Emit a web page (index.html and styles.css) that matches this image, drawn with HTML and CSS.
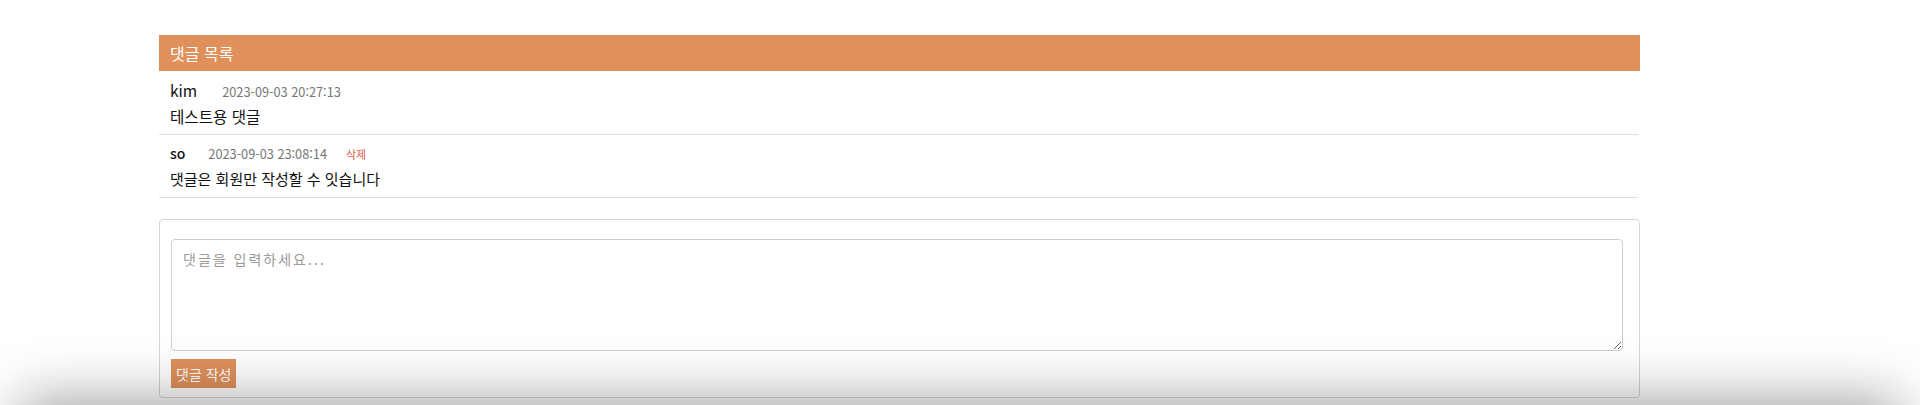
FILE: index.html
```html
<!DOCTYPE html>
<html lang="ko">
<head>
<meta charset="utf-8">
<title>댓글</title>
<link rel="stylesheet" href="styles.css">
</head>
<body>
<div class="wrap">
  <section class="comments">
    <div class="comments-head">댓글 목록</div>
    <ul class="comment-list">
      <li class="comment comment-first">
        <div class="comment-meta">
          <span class="author">kim</span>
          <span class="date">2023-09-03 20:27:13</span>
        </div>
        <div class="comment-body comment-body-lg">테스트용 댓글</div>
      </li>
      <li class="comment">
        <div class="comment-meta">
          <span class="author author-sm">so</span>
          <span class="date">2023-09-03 23:08:14</span>
          <a class="delete" href="#">삭제</a>
        </div>
        <div class="comment-body">댓글은 회원만 작성할 수 잇습니다</div>
      </li>
    </ul>
  </section>
  <form class="comment-form">
    <textarea class="comment-input" placeholder="댓글을 입력하세요..."></textarea>
    <button type="button" class="submit">댓글 작성</button>
  </form>
</div>
<div class="bottom-shade"></div>
</body>
</html>
```
FILE: styles.css
```css
html, body {
  margin: 0;
  padding: 0;
  background: #fff;
  font-family: "Noto Sans CJK KR", "Noto Sans", sans-serif;
  color: #222;
  overflow: hidden;
}
.wrap {
  width: 1481px;
  margin: 35px 0 0 159px;
}
.comments-head {
  background: #e0915b;
  color: #fff;
  height: 36px;
  line-height: 36px;
  padding-left: 11px;
  font-size: 16px;
}
.comment-list {
  list-style: none;
  margin: 0;
  padding: 0;
  width: 1479px;
}
.comment {
  border-bottom: 1px solid #dcdcdc;
  padding: 6px 11px 5px;
  height: 51px;
}
.comment-first {
  padding-top: 7px;
}
.comment-meta {
  display: flex;
  align-items: baseline;
  height: 25px;
  line-height: 25px;
}
.author {
  font-size: 15.5px;
  color: #111;
  margin-right: 25px;
}
.author-sm {
  font-size: 14px;
  font-weight: 500;
  margin-right: 23px;
}
.date {
  font-size: 12.75px;
  color: #777;
}
.delete {
  font-size: 11px;
  color: #e05a4a;
  text-decoration: none;
  margin-left: 19px;
}
.comment-body {
  font-size: 15px;
  line-height: 26px;
  color: #111;
}
.comment-body-lg {
  font-size: 15.6px;
}
.comment-form {
  margin-top: 21px;
  border: 1px solid #d6d6d6;
  border-radius: 4px;
  padding: 19px 10px 9px 11px;
  display: flex;
  flex-direction: column;
  align-items: flex-start;
  gap: 8px;
}
.comment-input {
  box-sizing: border-box;
  width: 1452px;
  height: 112px;
  border: 1px solid #cfcfcf;
  border-radius: 4px;
  padding: 9px 11px 7px;
  font-family: "Noto Sans CJK KR", sans-serif;
  font-size: 14px;
  letter-spacing: 2px;
  color: #333;
  margin: 0;
}
.comment-input::placeholder {
  color: #9a9a9a;
}
.submit {
  background: #e0915b;
  color: #fff;
  border: none;
  height: 29px;
  padding: 0 5px;
  font-family: "Noto Sans CJK KR", sans-serif;
  font-size: 14px;
  border-radius: 0;
  margin: 0;
}
.bottom-shade {
  position: fixed;
  left: 30px;
  right: 30px;
  top: 412px;
  height: 100px;
  box-shadow: 0 0 60px 10px rgba(0, 0, 0, 0.4);
  pointer-events: none;
}
```
